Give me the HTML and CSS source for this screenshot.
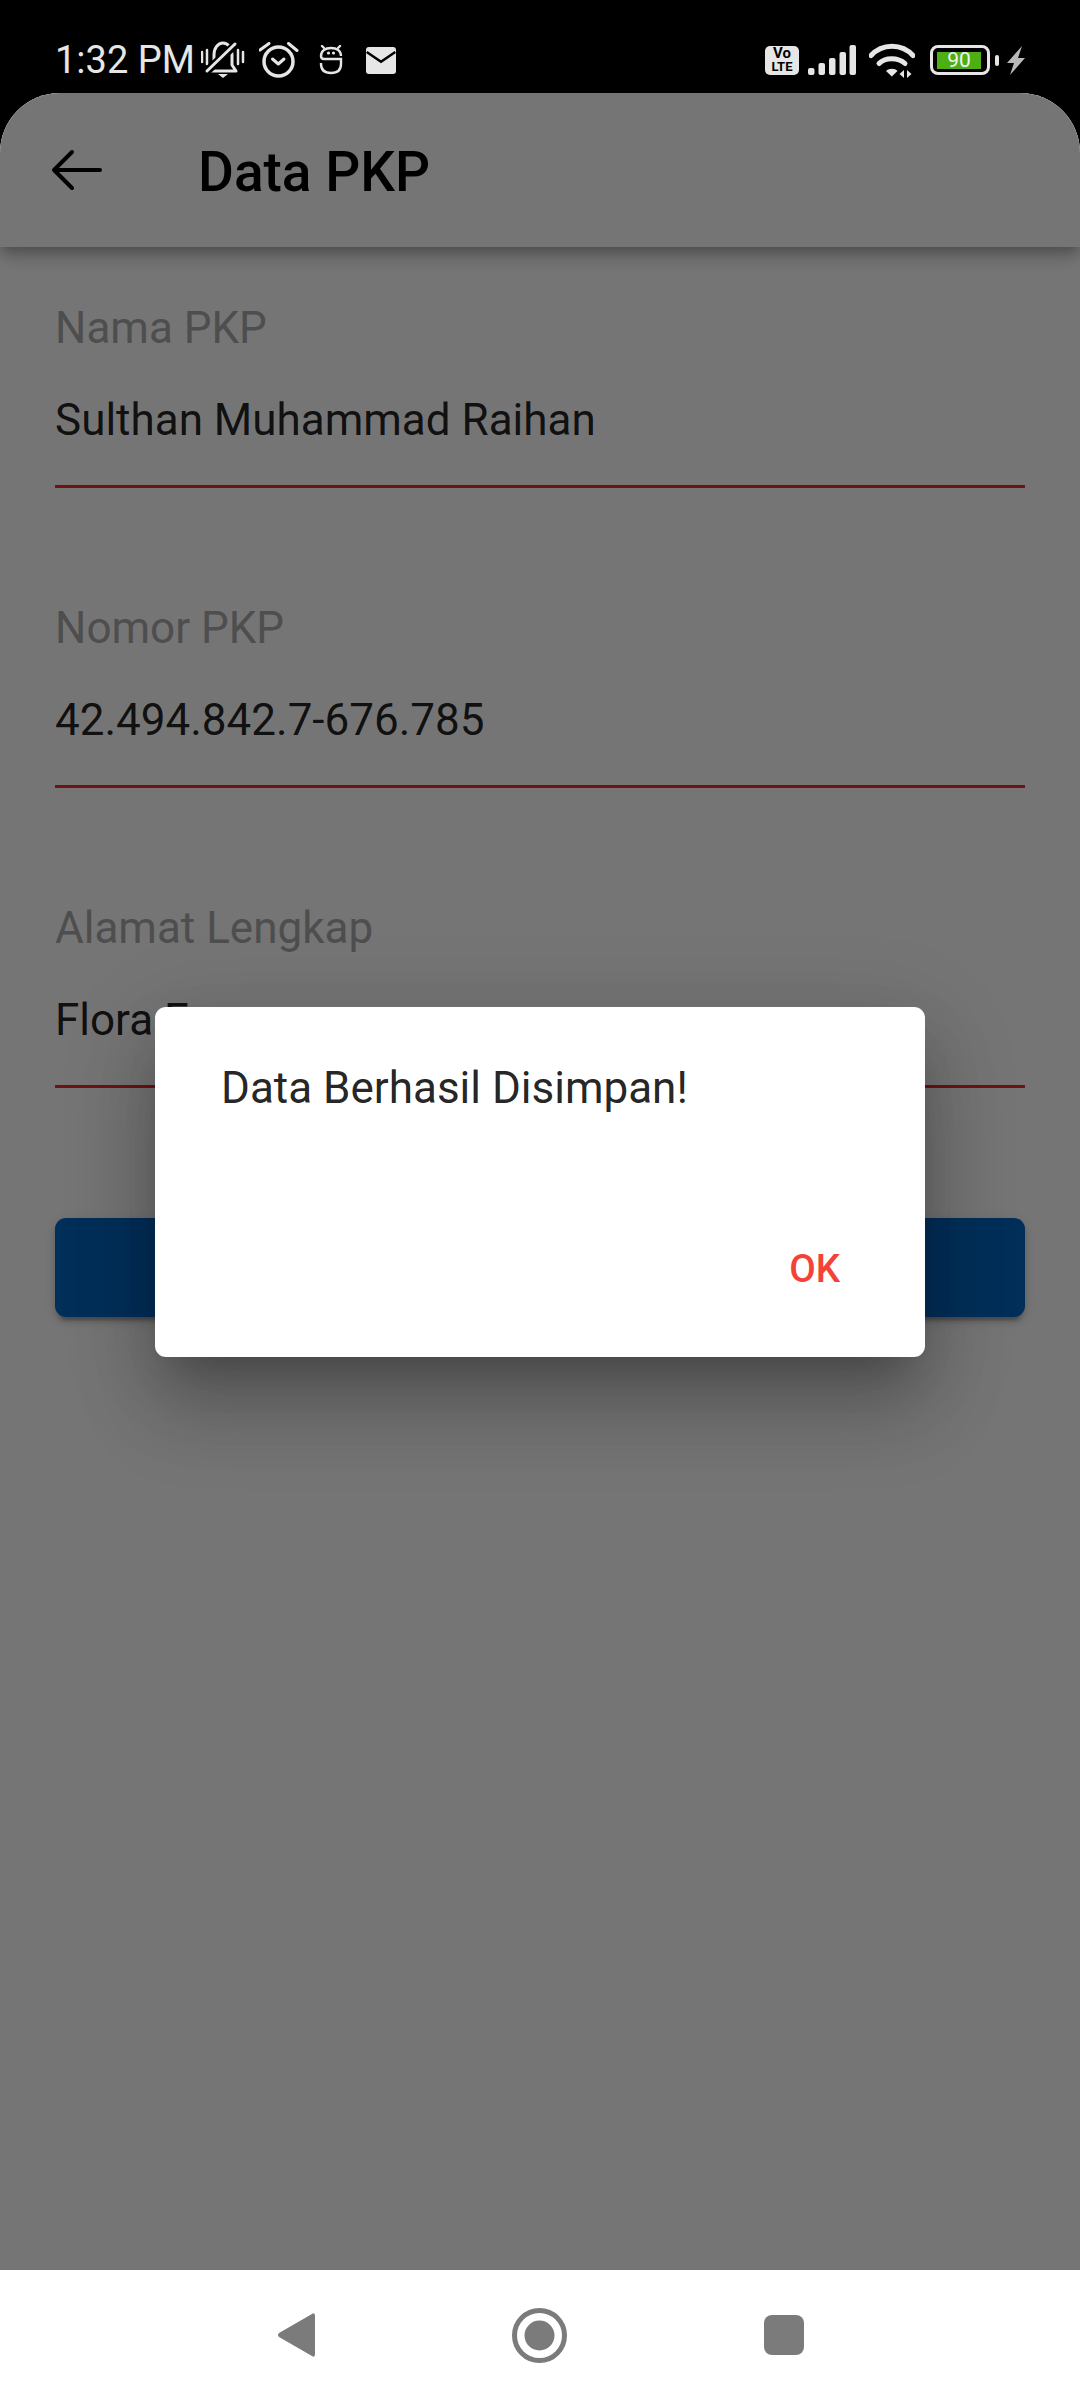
FILE: index.html
```html
<!DOCTYPE html>
<html>
<head>
  <meta name="viewport" content="width=device-width, initial-scale=1.0">
  <meta charset="UTF-8">
  <title>Data PKP</title>
  <link rel="stylesheet" href="styles.css">
</head>
<body>
  <div class="phone">
    <header class="status-bar">
      <span class="time">1:32 PM</span>
      <svg class="ic-bell" width="44" height="38" viewBox="0 0 44 38" fill="none">
        <path d="M1 11V21M6 9V23M37 9V23M42 11V21" stroke="#e6e6e6" stroke-width="2.5" stroke-linecap="round"/>
        <path d="M9 30L13 24V14C13 7 17 2 22 2C27 2 31 7 31 14V24L35 30Z" stroke="#e6e6e6" stroke-width="3" stroke-linejoin="round"/>
        <path d="M4 32L36 2" stroke="#000" stroke-width="8"/>
        <path d="M6 30L34 3" stroke="#e6e6e6" stroke-width="3" stroke-linecap="round"/>
        <path d="M17 33H27L22 37Z" fill="#e6e6e6"/>
      </svg>
      <svg class="ic-alarm" width="40" height="36" viewBox="0 0 40 36" fill="none" stroke="#e6e6e6">
        <circle cx="19.5" cy="19.5" r="14.5" stroke-width="3.5"/>
        <path d="M1 8L10 1.5M29.5 1.5L38 8.5" stroke-width="3" stroke-linecap="round"/>
        <path d="M13.5 17L19.3 22L25 17" stroke-width="3" stroke-linecap="round" stroke-linejoin="round"/>
      </svg>
      <svg class="ic-robot" width="24" height="30" viewBox="0 0 24 30" fill="none" stroke="#e6e6e6" stroke-width="2.4">
        <path d="M2 11C2 6 6 3 12 3C18 3 22 6 22 11M2 11Q2 14 5 14H22V19C22 25 18 28 12 28C6 28 2 25 2 19V18"/>
        <path d="M3 1L5 3M21 1L19 3" stroke-linecap="round"/>
        <circle cx="9.5" cy="8" r="1.6" fill="#e6e6e6" stroke="none"/>
        <circle cx="14.5" cy="8" r="1.6" fill="#e6e6e6" stroke="none"/>
      </svg>
      <svg class="ic-mail" width="30" height="27" viewBox="0 0 30 27">
        <rect width="30" height="27" rx="3" fill="#e6e6e6"/>
        <path d="M0.7 5L15 14.7L29.3 5" fill="none" stroke="#000" stroke-width="2.5"/>
      </svg>
      <div class="status-right">
        <div class="volte"><span class="volte-top">Vo</span><span>LTE</span></div>
        <svg class="ic-signal" width="48" height="30" viewBox="0 0 48 30" fill="#e6e6e6">
          <rect x="0" y="23" width="6.5" height="7" rx="2"/>
          <rect x="10.5" y="18" width="6.5" height="12" rx="2"/>
          <rect x="21" y="13" width="6.5" height="17" rx="2"/>
          <rect x="31.5" y="7" width="6.5" height="23" rx="2"/>
          <rect x="41.5" y="0" width="6.5" height="30" rx="2"/>
        </svg>
        <svg class="ic-wifi" width="46" height="35" viewBox="0 0 46 35" fill="none" stroke="#e6e6e6">
          <path d="M2 12.500C13 0 33 0 44 12.500" stroke-width="5" stroke-linecap="round"/>
          <path d="M10 20.500C16 14 29 14 36 20.500" stroke-width="5" stroke-linecap="round"/>
          <path d="M17 28C20 25 26 25 28.500 28L22.800 33.500Z" fill="#e6e6e6" stroke="none"/>
          <path d="M35 27V35L30.500 31ZM38 35V27L42.500 31Z" fill="#e6e6e6" stroke="none"/>
        </svg>
        <div class="battery"><div class="battery-level">90</div></div>
        <div class="battery-nub"></div>
        <svg class="ic-bolt" width="18" height="29" viewBox="0 0 18 29">
          <path d="M15 0L0 17H7L3 29L18 12H11Z" fill="#b9b9b9"/>
        </svg>
      </div>
    </header>

    <main class="screen">
      <div class="page">
        <div class="app-bar">
          <svg width="51" height="42" viewBox="0 0 51 42" fill="none" stroke="#000" stroke-width="4" stroke-linecap="round" stroke-linejoin="round">
            <path d="M49 21H3M21 3L3 21L21 39"/>
          </svg>
          <h1 class="title">Data PKP</h1>
        </div>
        <form class="form">
          <div class="field">
            <div class="label">Nama PKP</div>
            <div class="value">Sulthan Muhammad Raihan</div>
          </div>
          <div class="field">
            <div class="label">Nomor PKP</div>
            <div class="value">42.494.842.7-676.785</div>
          </div>
          <div class="field">
            <div class="label">Alamat Lengkap</div>
            <div class="value">Flora E</div>
          </div>
          <button class="save" type="button"></button>
        </form>
      </div>
      <div class="scrim">
        <div class="dialog">
          <p class="dialog-text">Data Berhasil Disimpan!</p>
          <div class="dialog-actions"><span class="ok">OK</span></div>
        </div>
      </div>
    </main>

    <nav class="nav-bar">
      <svg width="38" height="46" viewBox="0 0 38 46">
        <path d="M35 2L2 21Q0 23 2 25L35 44Q38 46 38 42V4Q38 0 35 2Z" fill="#7b7b7b"/>
      </svg>
      <svg width="55" height="55" viewBox="0 0 55 55">
        <circle cx="27.500" cy="27.500" r="25" fill="none" stroke="#7b7b7b" stroke-width="5"/>
        <circle cx="27.500" cy="27.500" r="15" fill="#7b7b7b"/>
      </svg>
      <div class="nav-square"></div>
    </nav>
  </div>
</body>
</html>
```

FILE: styles.css
```css
body {
  margin: 0;
  font-family: Roboto, sans-serif;
  background-color: #000;
}

.phone {
  display: flex;
  flex-direction: column;
  width: 1080px;
  height: 2400px;
  overflow: hidden;
}

/* status bar */
.status-bar {
  display: flex;
  align-items: center;
  height: 93px;
  padding: 27px 55px 0 55px;
  box-sizing: border-box;
  background-color: #000;
  color: #e6e6e6;
}

.time {
  font-size: 38px;
  line-height: 44px;
}

.ic-bell {
  margin-left: 6px;
}

.ic-alarm {
  margin-left: 14px;
}

.ic-robot {
  margin-left: 20px;
}

.ic-mail {
  margin-left: 23px;
}

.status-right {
  display: flex;
  align-items: center;
  margin-left: auto;
}

.volte {
  display: flex;
  flex-direction: column;
  align-items: center;
  justify-content: center;
  width: 34px;
  height: 29px;
  border-radius: 5px;
  background-color: #e6e6e6;
  color: #000;
  font-size: 13px;
  font-weight: 700;
  line-height: 13px;
}

.volte-top {
  font-size: 15px;
}

.ic-signal {
  margin-left: 9px;
}

.ic-wifi {
  margin-left: 13px;
}

.battery {
  display: flex;
  align-items: center;
  width: 60px;
  height: 30px;
  margin-left: 15px;
  padding-left: 4px;
  border: 3px solid #e6e6e6;
  border-radius: 8px;
  box-sizing: border-box;
}

.battery-level {
  width: 44px;
  height: 17px;
  background-color: #4caf14;
  color: #f2f2f2;
  font-size: 21px;
  line-height: 17px;
  text-align: center;
}

.battery-nub {
  width: 4px;
  height: 11px;
  margin-left: 5px;
  border-radius: 2px;
  background-color: #e6e6e6;
}

.ic-bolt {
  margin-left: 8px;
}

/* page under the dialog */
.screen {
  position: relative;
  flex: 1;
}

.page {
  height: 100%;
  border-radius: 60px 60px 0 0;
  background-color: #fff;
  overflow: hidden;
}

.app-bar {
  display: flex;
  align-items: center;
  height: 154px;
  padding-left: 51px;
  box-sizing: border-box;
  background-color: #fff;
  box-shadow: 0 5px 11px -3px rgba(0, 0, 0, 0.2), 0 11px 14px rgba(0, 0, 0, 0.14), 0 3px 28px rgba(0, 0, 0, 0.12);
}

.title {
  margin: 3px 0 0 96px;
  font-size: 55px;
  font-weight: 500;
  color: #000;
}

.form {
  padding: 55px 55px 0 55px;
}

.field {
  height: 186px;
  margin-bottom: 114px;
  box-sizing: border-box;
  border-bottom: 3px solid #f2282c;
}

.label {
  font-size: 44px;
  line-height: 52px;
  color: #aaa;
}

.value {
  margin-top: 40px;
  font-size: 44px;
  line-height: 52px;
  color: rgba(0, 0, 0, 0.87);
}

.save {
  display: block;
  width: 100%;
  height: 99px;
  margin-top: 130px;
  border: none;
  border-radius: 11px;
  background-color: #0068c2;
  box-shadow: 0 8px 3px -5px rgba(0, 0, 0, 0.2), 0 5px 5px rgba(0, 0, 0, 0.14), 0 3px 14px rgba(0, 0, 0, 0.12);
}

/* dialog */
.scrim {
  position: absolute;
  top: 0;
  right: 0;
  bottom: 0;
  left: 0;
  display: flex;
  align-items: center;
  justify-content: center;
  background-color: rgba(0, 0, 0, 0.54);
  border-radius: 60px 60px 0 0;
}

.dialog {
  display: flex;
  flex-direction: column;
  justify-content: space-between;
  width: 770px;
  height: 350px;
  padding: 55px 65px 66px 66px;
  box-sizing: border-box;
  border-radius: 11px;
  background-color: #fff;
  box-shadow: 0 30px 41px -19px rgba(0, 0, 0, 0.22), 0 55px 80px 4px rgba(0, 0, 0, 0.16), 0 20px 90px 12px rgba(0, 0, 0, 0.12);
}

.dialog-text {
  margin: 0;
  font-size: 44px;
  line-height: 52px;
  color: rgba(0, 0, 0, 0.87);
}

.dialog-actions {
  display: flex;
  justify-content: flex-end;
  padding-right: 20px;
}

.ok {
  font-size: 38.5px;
  font-weight: 500;
  line-height: 44px;
  color: #f44336;
}

/* navigation bar */
.nav-bar {
  display: flex;
  align-items: center;
  justify-content: center;
  gap: 197px;
  height: 130px;
  background-color: #fff;
}

.nav-square {
  width: 40px;
  height: 40px;
  border-radius: 8px;
  background-color: #7b7b7b;
}
```
